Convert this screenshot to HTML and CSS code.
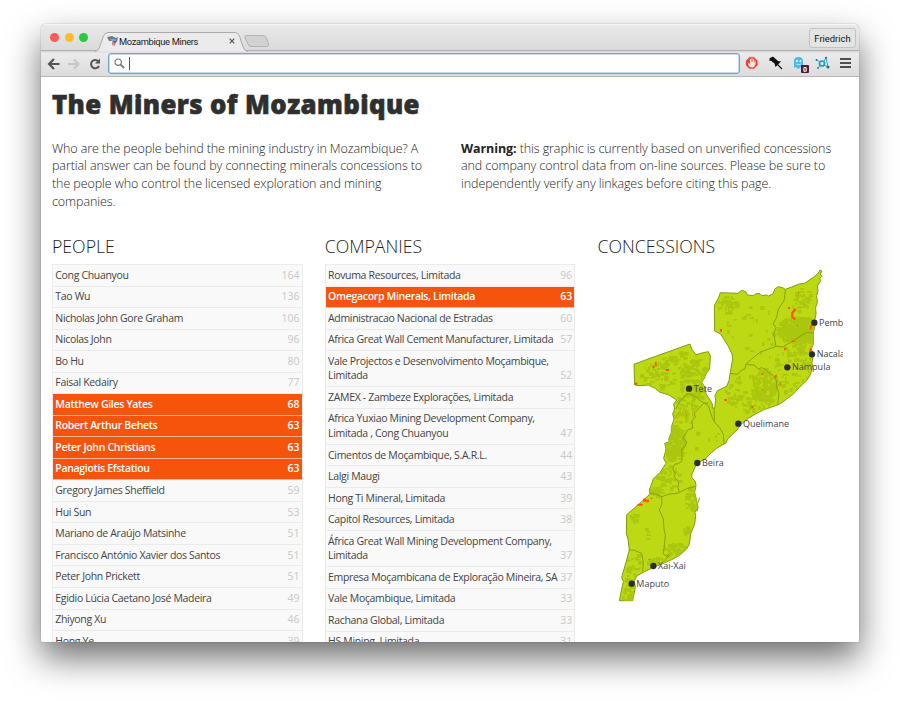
FILE: index.html
```html
<!DOCTYPE html>
<html lang="en">
<head>
<meta charset="utf-8">
<title>Mozambique Miners</title>
<link rel="stylesheet" href="styles.css">
</head>
<body>
<div class="window">
  <header class="chrome">
    <div class="tabbar">
      <div class="lights"><i class="red"></i><i class="amber"></i><i class="green"></i></div>
      <div class="tab">
        <svg class="tab-shape" width="154" height="20" viewBox="0 0 154 20"><path d="M0 19.500C3 19 4 17 5 14L8.500 4Q10 .5 13 .5H140Q143 .5 144.500 4L148 15Q149.500 19 153 19.500" fill="#ebebeb" stroke="#aaa"/></svg>
        <svg class="favicon" width="11" height="11" viewBox="0 0 11 11"><path d="M0 1L5 0L9 2L11 1L10 6L7 7L5 5L2 5Z" fill="#77797d"/><path d="M3 3L8 3L9 5L5 5Z" fill="#6daee5"/><path d="M5 6L9 6L8 10L5 9Z" fill="#d88b80"/><path d="M6 5L9 5L8 8Z" fill="#666"/></svg>
        <span class="tab-title">Mozambique Miners</span>
        <svg class="close" width="6" height="6" viewBox="0 0 6 6"><path d="M.7 .7L5.300 5.300M5.300 .7L.7 5.300" stroke="#555" stroke-width="1.200"/></svg>
      </div>
      <svg class="newtab" width="26" height="13" viewBox="0 0 26 13"><path d="M3 .5H19Q21.500 .5 22.500 3L24.500 9Q25 11.500 22.500 11.500H7Q5 11.500 4 9L1 3Q0 .5 3 .5Z" fill="#d2d2d2" stroke="#b2b2b2"/></svg>
      <div class="user">Friedrich</div>
    </div>
    <div class="toolbar">
      <svg class="nav" width="56" height="14" viewBox="0 0 56 14" fill="none">
        <path d="M12.500 7H2.500M7 2L2 7L7 12" stroke="#555" stroke-width="2.200"/>
        <path d="M21 7H31M27 2.500L31.500 7L27 11.500" stroke="#c6c6c6" stroke-width="2"/>
        <path d="M51.300 4.200A4.200 4.200 0 1 0 52 9" stroke="#555" stroke-width="2"/><path d="M53 1.500V6.500H48Z" fill="#555"/>
      </svg>
      <div class="omnibox">
        <svg width="11" height="11" viewBox="0 0 11 11" fill="none" stroke="#777"><circle cx="4.200" cy="4.200" r="3.200" stroke-width="1.200"/><path d="M6.700 6.700L10 10" stroke-width="1.900"/></svg>
        <i class="caret"></i>
      </div>
      <svg class="tools" width="110" height="20" viewBox="0 0 110 20">
        <path d="M4 3.500H9L13.300 7.500V12.500L9.500 16.500H4L.2 12.500V7.500Z" fill="#f8f1ef" stroke="#cfc8c7" stroke-width=".6"/>
        <path d="M4.300 4.200H9L12.600 7.800V12.200L9 15.800H4.300L.9 12.200V7.800Z" fill="#e94335"/><path d="M3.300 9.500V12Q4.500 14.500 7 14.500T10.500 11V7.500H9.500V9.500H9V6H8V9H7.500V5.300H6.500V9H6V6H5V11Z" fill="#f6e6e3"/>
        <path d="M24.500 5.200L28 3.500L33 8L36 8.500L30.500 14L29.500 10.500L26 7.700L24.500 8Z" fill="#111"/><path d="M31 10L37 16" stroke="#111" stroke-width="1.100"/>
        <path d="M49 15V8Q49 4 53.500 4T58 8V15L56 14L53 16L51 14Z" fill="#49bce8"/><circle cx="52" cy="8" r="1" fill="#fff"/><circle cx="55.500" cy="8" r="1" fill="#fff"/><path d="M51.500 11Q53.500 12.500 56 11" stroke="#fff" stroke-width=".7" fill="none"/>
        <rect x="56" y="12" width="8" height="8" rx="1" fill="#42203f"/><text x="60" y="18.500" text-anchor="middle" class="badge">0</text>
        <g fill="none" stroke="#1f9cc0"><circle cx="77" cy="10.500" r="2.500" stroke-width="1.700"/><path d="M71.500 7L75 9M79 8.500L81 4.500M79.500 12L83 14M75 12.500L73 15M81 4.500L83 14" stroke-width=".9"/></g><g fill="#23779c"><circle cx="71.500" cy="7" r="1"/><circle cx="81" cy="4.800" r="1.100"/><circle cx="83" cy="14" r="1.600"/><circle cx="73" cy="15" r=".9"/></g>
        <path d="M95 6H106M95 10H106M95 14H106" stroke="#4d4d4d" stroke-width="2.200"/>
      </svg>
    </div>
  </header>
  <main class="page">
    <h1>The Miners of Mozambique</h1>
    <div class="intro">
      <p>Who are the people behind the mining industry in Mozambique? A<br>partial answer can be found by connecting minerals concessions to<br>the people who control the licensed exploration and mining<br>companies.</p>
      <p><strong>Warning:</strong> this graphic is currently based on unverified concessions<br>and company control data from on-line sources. Please be sure to<br>independently verify any linkages before citing this page.</p>
    </div>
    <div class="columns">
      <section>
        <h2>PEOPLE</h2>
        <ul class="list">
          <li><span>Cong Chuanyou</span><b>164</b></li>
          <li><span>Tao Wu</span><b>136</b></li>
          <li><span>Nicholas John Gore Graham</span><b>106</b></li>
          <li><span>Nicolas John</span><b>96</b></li>
          <li><span>Bo Hu</span><b>80</b></li>
          <li><span>Faisal Kedairy</span><b>77</b></li>
          <li class="on"><span>Matthew Giles Yates</span><b>68</b></li>
          <li class="on"><span>Robert Arthur Behets</span><b>63</b></li>
          <li class="on"><span>Peter John Christians</span><b>63</b></li>
          <li class="on"><span>Panagiotis Efstatiou</span><b>63</b></li>
          <li><span>Gregory James Sheffield</span><b>59</b></li>
          <li><span>Hui Sun</span><b>53</b></li>
          <li><span>Mariano de Araújo Matsinhe</span><b>51</b></li>
          <li><span>Francisco António Xavier dos Santos</span><b>51</b></li>
          <li><span>Peter John Prickett</span><b>51</b></li>
          <li><span>Egidio Lúcia Caetano José Madeira</span><b>49</b></li>
          <li><span>Zhiyong Xu</span><b>46</b></li>
          <li><span>Hong Ye</span><b>39</b></li>
        </ul>
      </section>
      <section>
        <h2>COMPANIES</h2>
        <ul class="list">
          <li><span>Rovuma Resources, Limitada</span><b>96</b></li>
          <li class="on"><span>Omegacorp Minerals, Limitada</span><b>63</b></li>
          <li><span>Administracao Nacional de Estradas</span><b>60</b></li>
          <li><span>Africa Great Wall Cement Manufacturer, Limitada</span><b>57</b></li>
          <li><span>Vale Projectos e Desenvolvimento Moçambique,<br>Limitada</span><b>52</b></li>
          <li><span>ZAMEX - Zambeze Explorações, Limitada</span><b>51</b></li>
          <li><span>Africa Yuxiao Mining Development Company,<br>Limitada , Cong Chuanyou</span><b>47</b></li>
          <li><span>Cimentos de Moçambique, S.A.R.L.</span><b>44</b></li>
          <li><span>Lalgi Maugi</span><b>43</b></li>
          <li><span>Hong Ti Mineral, Limitada</span><b>39</b></li>
          <li><span>Capitol Resources, Limitada</span><b>38</b></li>
          <li><span>África Great Wall Mining Development Company,<br>Limitada</span><b>37</b></li>
          <li><span>Empresa Moçambicana de Exploração Mineira, SA</span><b>37</b></li>
          <li><span>Vale Moçambique, Limitada</span><b>33</b></li>
          <li><span>Rachana Global, Limitada</span><b>33</b></li>
          <li><span>HS Mining, Limitada</span><b>31</b></li>
        </ul>
      </section>
      <section>
        <h2>CONCESSIONS</h2>
        <svg class="map" width="245" height="350" viewBox="-6 0 735 1050">
          <defs><clipPath id="land"><use href="#country"/></clipPath></defs>
          <path id="country" class="land" d="M361 101L414 103L420 97L428 94L438 99L442 108L460 110L468 104L480 104L486 110L500 108L506 111L520 103L524 90L535 83L548 86L556 91L575 84L598 75L614 73L640 55L655 42L660 33L666 36L661 45L666 52L660 58L661 68L652 80L654 95L650 110L652 130L647 145L648 165L643 190L645 200L640 220L640 255L634 270L640 285L636 310L637 325L632 345L620 365L600 383L580 405L560 420L538 436L515 444L490 453L470 463L445 478L420 498L414 510L383 540L378 552L368 557L350 568L332 583L316 600L300 608L290 612L285 625L276 645L275 655L286 668L288 680L284 700L290 725L294 745L285 760L287 770L284 795L272 825L270 843L268 855L260 870L240 888L215 902L190 913L160 925L130 940L112 950L103 965L106 985L98 1025L58 1025L65 990L70 968L65 955L75 920L88 873L84 840L79 825L80 767L100 750L125 728L150 705L148 693L160 660L180 640L198 613L191 598L198 570L194 553L208 548L206 540L214 520L214 505L222 480L218 465L224 450L221 435L230 423L205 407L180 400L165 388L145 378L120 380L104 378L102 316L150 298L200 280L270 255L275 270L288 287L305 282L325 278L331 290L329 330L318 345L312 360L305 370L315 385L318 405L328 420L337 435L337 447L344 447L347 425L345 410L352 395L380 382L387 365L390 345L398 300L396 285L385 262L370 238L362 225L344 216L343 150L344 137L355 118Z"/>
          <g id="texture" clip-path="url(#land)"></g>
          <g class="borders">
            <path d="M556 91L555 105L552 125L535 150L530 175L519 195L528 205L521 225L528 262"/>
            <path d="M390 343L412 346L425 333L435 330L438 315L455 300L480 280L505 270L530 262L548 264L580 245L600 232L620 220L640 222"/>
            <path d="M440 317L462 318L475 330L485 326L500 333L505 340L520 350L530 365L530 385L537 400L533 437"/>
            <path d="M228 450L240 425L252 415L265 403L290 415L300 425L310 430L325 440L335 472L343 488L360 508L370 525L372 555"/>
            <path d="M325 432L310 433L300 445L283 462L286 475L276 485L278 508L262 513L254 530L248 538L260 548L256 562L245 570L246 606L235 614L225 615L218 628L226 645L222 652L236 670L234 685L238 700"/>
            <path d="M342 447L343 488M150 702L165 705L185 713L205 706L235 702L260 689L287 682"/>
            <path d="M185 713L186 735L178 753L190 780L192 810L196 830L190 885L200 892L205 886L206 892L194 903"/>
            <path d="M88 873L100 873L125 883L130 910L128 938"/>
            <path d="M294 731L299 716M291 758L294 745"/>
          </g>
          <g class="hits">
            <path d="M587 149L577 162V174L586 181" fill="none" class="bow"/>
            <path d="M564 144h6v6h-6zM594 100h3v3h-3zM591 198h3v3h-3zM360 210h6v8h-6zM630 200l6-6v10l-4 8h-3zM576 245h8v4h-8zM552 266h7l-2 8h-4zM628 268h6v12h-6zM485 342h5v5h-5zM524 350l6-4v8l-6 4zM539 372h4v5h-4zM485 390h3v3h-3zM454 440h6v6h-6zM373 420h8v6h-8zM104 371h8v6h-8zM197 330h10v6h-10zM165 308h5v12h-5zM157 320h7v6h-7zM229 486h3v4h-3zM258 467h3v3h-3zM129 719h10v9h-10zM139 722h8v8h-8zM152 716h5v4h-5zM111 737l5-3h12v6h-17zM145 900h5v2h-5zM508 293h3v3h-3z"/>
          </g>
          <g class="cities">
            <circle cx="643" cy="191" r="9.500"/><text x="657" y="200">Pemba</text>
            <circle cx="636" cy="286" r="9.500"/><text x="650" y="295">Nacala</text>
            <circle cx="562" cy="325" r="9.500"/><text x="576" y="334">Nampula</text>
            <circle cx="267" cy="389" r="9.500"/><text x="281" y="398">Tete</text>
            <circle cx="415" cy="494" r="9.500"/><text x="429" y="503">Quelimane</text>
            <circle cx="292" cy="612" r="9.500"/><text x="306" y="621">Beira</text>
            <circle cx="160" cy="921" r="9.500"/><text x="174" y="930">Xai-Xai</text>
            <circle cx="95" cy="974" r="9.500"/><text x="109" y="983">Maputo</text>
          </g>
        </svg>
      </section>
    </div>
  </main>
</div>
<script src="map.js"></script>
</body>
</html>
```
FILE: styles.css
```css
* { box-sizing: border-box; }
body { margin: 0; padding: 24px 41px 0; height: 701px; overflow: hidden; background: #fff; font-family: "Open Sans", sans-serif; color: #333; }
.window { width: 818px; height: 618px; overflow: hidden; border-radius: 5px 5px 1px 1px; background: #fff; box-shadow: 0 0 1px rgba(0,0,0,.55), 0 16px 34px rgba(0,0,0,.57); }
.chrome { height: 53px; background: linear-gradient(#e9e9e9, #d9d9d9 27px, #ebebeb 28px, #dcdcdc); border-bottom: 1px solid #b5b5b5; border-top: 1px solid #f5f5f5; }
.tabbar { height: 26px; display: flex; align-items: flex-start; border-bottom: 1px solid #b0b0b0; }
.lights { display: flex; gap: 5.600px; padding: 8px 0 0 9px; width: 54px; flex: none; }
.lights i { width: 9px; height: 9px; border-radius: 50%; flex: none; }
.red { background: #fc5b57; } .amber { background: #fdbc2e; } .green { background: #27cb40; }
.tab { display: flex; align-items: center; width: 149px; height: 20px; margin-top: 7px; position: relative; padding: 0 9px 2px 12px; flex: none; }
.tab-shape { position: absolute; left: 0; top: 0; }
.favicon, .close { position: relative; }
.tab-title { position: relative; font: 9.300px Roboto, sans-serif; color: #222; margin-left: 1px; flex: 1; white-space: nowrap; letter-spacing: -.33px; }
.newtab { margin: 10px 0 0 -.5px; }
.user { margin: 3px 3px 0 auto; width: 47px; height: 20px; border: 1px solid #c3c3c3; border-radius: 3px; background: #e4e4e4; font: 9.400px/19px Roboto, sans-serif; color: #111; text-align: center; }
.toolbar { display: flex; align-items: center; height: 25px; }
.nav { margin-left: 6px; flex: none; }
.omnibox { display: flex; align-items: center; width: 632px; height: 21px; margin-left: 5px; padding-left: 5px; background: #fff; border: 1px solid #69a1e3; box-shadow: inset 0 0 0 .5px #8bb8ef; border-radius: 3px; flex: none; }
.omnibox svg { flex: none; }
.caret { width: 1px; height: 13px; margin-left: 4px; background: #555; }
.tools { margin: -1px 0 0 5px; flex: none; }
.badge { font: bold 7px "Open Sans", sans-serif; fill: #fff; }
.page { padding: 10px 11px 0 11px; height: 565px; overflow: hidden; }
h1 { margin: 0; font-size: 25.800px; line-height: 35px; font-weight: 800; color: #2f2f2f; white-space: nowrap; letter-spacing: .38px; -webkit-text-stroke: .6px #2f2f2f; }
.intro { display: grid; grid-template-columns: 409px 1fr; margin-top: 17.500px; height: 94px; font-weight: 300; font-size: 12.500px; line-height: 17.700px; white-space: nowrap; letter-spacing: -.088px; color: #1c1c1c; }
.intro p { margin: 0; }
.intro strong { font-weight: 700; color: #222; }
.columns { display: grid; grid-template-columns: 250.500px 250.500px 245px; column-gap: 22.250px; }
h2 { margin: 0; height: 30.500px; font-size: 17.700px; line-height: 25px; font-weight: 300; white-space: nowrap; color: #1c1c1c; }
.list { list-style: none; margin: 0; padding: 0; border: 1px solid #ebebeb; border-width: 1px 1px 0; }
.list li { display: flex; justify-content: space-between; align-items: flex-end; padding: 2.700px 2px 3.300px 2.300px; border-bottom: 1px solid #ebebeb; background: #f9f9f9; font-size: 10.500px; line-height: 14.550px; white-space: nowrap; }
.list span { letter-spacing: -.325px; color: #444; }
.list b { font-weight: 400; color: #c8c8c8; }
.list .on { background: #f6530d; border-color: #efb69b; font-weight: 600; }
.list .on span { color: #fff; letter-spacing: -.31px; }
.list .on b { color: #fff; font-weight: 600; }
.map { display: block; margin-top: -5px; overflow: hidden; }
.land { fill: #bcd913; stroke: #849a13; stroke-width: 3; }
.patch { fill: #aac60f; }
.borders path { fill: none; stroke: #8aa110; stroke-width: 3; stroke-linejoin: round; }
.hits { fill: #ff5406; }
.bow { stroke: #ff5406; stroke-width: 7; }
.cities { fill: #2d2d2d; font-size: 27px; }
.cities text { fill: #444; }
```
FILE: map.js
```js
// Scatter concession patches: [x, y, radiusX, radiusY, count]
const zones = [
  [590, 208, 62, 38, 420], [600, 120, 35, 35, 35], [380, 135, 28, 28, 40], [450, 210, 75, 80, 24],
  [450, 400, 80, 55, 90], [490, 375, 40, 50, 100], [570, 330, 55, 70, 55], [610, 270, 35, 40, 35],
  [280, 360, 45, 60, 140], [170, 350, 60, 40, 70], [240, 300, 60, 25, 35], [250, 450, 35, 45, 50],
  [220, 550, 30, 55, 160], [200, 645, 38, 40, 45], [165, 695, 20, 12, 25], [268, 715, 15, 40, 28],
  [225, 872, 42, 22, 55], [165, 903, 30, 14, 20], [95, 930, 25, 60, 35], [255, 810, 12, 12, 10],
  [80, 1000, 18, 22, 25], [320, 540, 45, 50, 10], [105, 772, 14, 12, 8], [140, 820, 6, 20, 4]
];
let seed = 37;
const rnd = () => (seed = (seed * 16807) % 2147483647) / 2147483647;
let d = "";
for (const [cx, cy, rx, ry, n] of zones) {
  for (let i = 0; i < n; i++) {
    const a = rnd() * Math.PI * 2, r = Math.sqrt(rnd());
    const x = Math.round((cx + Math.cos(a) * r * rx) / 3) * 3;
    const y = Math.round((cy + Math.sin(a) * r * ry) / 3) * 3;
    const w = 5 + Math.floor(rnd() * 4) * 3, h = 5 + Math.floor(rnd() * 3) * 3;
    d += `M${x} ${y}h${w}v${h}h${-w}z`;
  }
}
const patch = document.createElementNS("http://www.w3.org/2000/svg", "path");
patch.setAttribute("class", "patch");
patch.setAttribute("d", d);
document.getElementById("texture").appendChild(patch);
```
